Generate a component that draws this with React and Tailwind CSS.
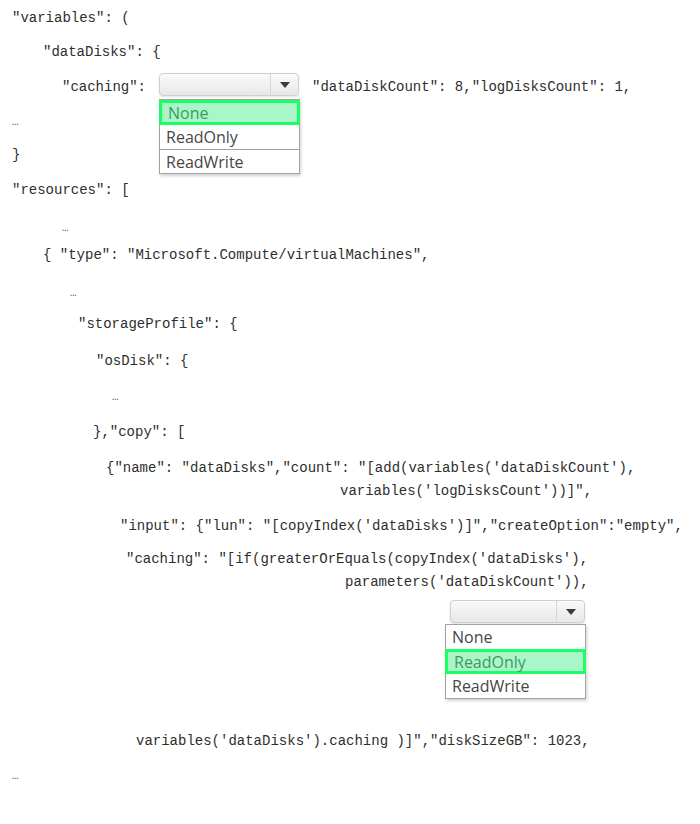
import React from "react";

const mono = { fontFamily: '"Liberation Mono", "DejaVu Sans Mono", monospace' };

const Line = ({ className = "", children }) => (
    <div className={`flex h-[20px] items-center whitespace-pre text-[14px] leading-[20px] text-[#2e2e2e] ${className}`}>
        {children}
    </div>
);

const Dots = () => <span className="text-[11px] text-[#555]">…</span>;

const Arrow = () => (
    <svg width="10" height="6" viewBox="0 0 10 6">
        <path d="M0 0 H10 L5 6 Z" fill="#3a3a3a" />
    </svg>
);

const SelectBox = ({ width }) => (
    <div
        className={`flex h-[23px] ${width} rounded-[4px] border border-[#cfcfcf] bg-gradient-to-b from-[#fafafa] to-[#e8e8e8] shadow-[0_1px_2px_rgba(0,0,0,0.12)]`}
    >
        <div className="flex-1" />
        <div className="flex w-[28px] items-center justify-center border-l border-[#d6d6d6]">
            <Arrow />
        </div>
    </div>
);

const Options = ({ selected, className = "" }) => {
    const items = ["None", "ReadOnly", "ReadWrite"];
    return (
        <div
            className={`absolute z-10 flex w-[141px] flex-col border border-[#a3a3a3] bg-white shadow-[1px_2px_3px_rgba(0,0,0,0.18)] ${className}`}
            style={{ fontFamily: '"Open Sans", "Noto Sans", sans-serif' }}
        >
            {items.map((item, i) =>
                item === selected ? (
                    <div
                        key={item}
                        className="-mx-px flex h-[25px] items-center border-[3px] border-[#1cff62] bg-[#a9f6c9] px-[6px] text-[16px] text-[#3d9a5e]"
                    >
                        {item}
                    </div>
                ) : (
                    <div
                        key={item}
                        className={`flex h-[24px] items-center px-[6px] text-[16px] text-[#474747] ${
                            i > 0 && items[i - 1] !== selected ? "border-t border-[#a3a3a3]" : ""
                        }`}
                    >
                        {item}
                    </div>
                )
            )}
        </div>
    );
};

export default function App() {
    return (
        <div className="min-h-[824px] w-[700px] bg-white pt-[8px]" style={mono}>
            <Line className="pl-[12px]">"variables": (</Line>
            <Line className="mt-[14px] pl-[43px]">"dataDisks": {"{"}</Line>

            {/* first caching select */}
            <Line className="mt-[15px] pl-[62px]">
                <span>"caching":</span>
                <div className="relative mb-[5px] ml-[13px]">
                    <SelectBox width="w-[140px]" />
                    <Options selected="None" className="left-0 top-full mt-[3px]" />
                </div>
                <span className="ml-[13px]">"dataDiskCount": 8,"logDisksCount": 1,</span>
            </Line>

            <Line className="mt-[15px] pl-[12px]"><Dots /></Line>
            <Line className="mt-[13px] pl-[12px]">{"}"}</Line>
            <Line className="mt-[15px] pl-[12px]">"resources": [</Line>
            <Line className="mt-[18px] pl-[62px]"><Dots /></Line>
            <Line className="mt-[7px] pl-[43px]">{'{ "type": "Microsoft.Compute/virtualMachines",'}</Line>
            <Line className="mt-[18px] pl-[70px]"><Dots /></Line>
            <Line className="mt-[11px] pl-[78px]">"storageProfile": {"{"}</Line>
            <Line className="mt-[17px] pl-[96px]">"osDisk": {"{"}</Line>
            <Line className="mt-[16px] pl-[112px]"><Dots /></Line>
            <Line className="mt-[15px] pl-[93px]">{'},"copy": ['}</Line>
            <Line className="mt-[16px] pl-[106px]">{`{"name": "dataDisks","count": "[add(variables('dataDiskCount'),`}</Line>
            <Line className="mt-[3px] pl-[340px]">{`variables('logDisksCount'))]",`}</Line>
            <Line className="mt-[15px] pl-[120px]">{`"input": {"lun": "[copyIndex('dataDisks')]","createOption":"empty",`}</Line>
            <Line className="mt-[13px] pl-[126px]">{`"caching": "[if(greaterOrEquals(copyIndex('dataDisks'),`}</Line>
            <Line className="mt-[3px] pl-[345px]">{`parameters('dataDiskCount')),`}</Line>

            {/* second caching select */}
            <div className="mt-[8px] flex pl-[450px]">
                <div className="relative">
                    <SelectBox width="w-[135px]" />
                    <Options selected="ReadOnly" className="-left-[5px] top-full mt-[1px]" />
                </div>
            </div>

            <Line className="mt-[108px] pl-[136px]">{`variables('dataDisks').caching )]","diskSizeGB": 1023,`}</Line>
            <Line className="mt-[15px] pl-[12px]"><Dots /></Line>
        </div>
    );
}
